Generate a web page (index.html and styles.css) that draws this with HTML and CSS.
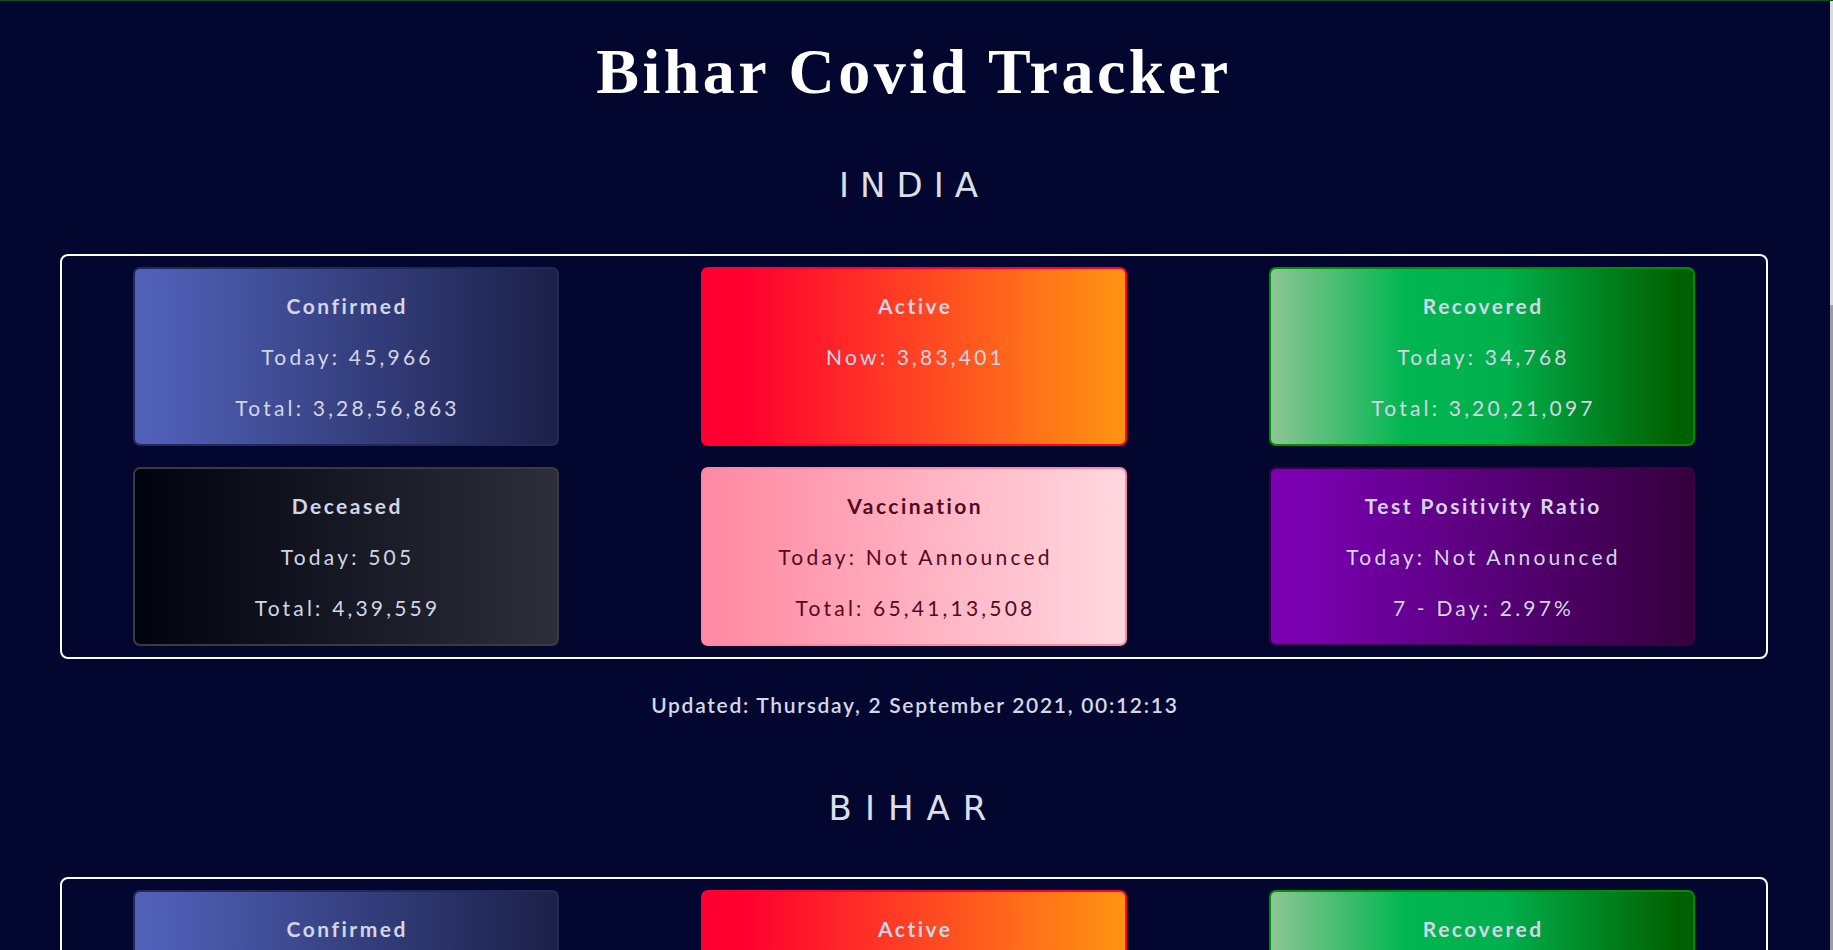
FILE: index.html
```html
<!DOCTYPE html>
<html lang="en">
<head>
<meta charset="utf-8">
<title>Bihar Covid Tracker</title>
<link rel="stylesheet" href="styles.css">
</head>
<body>
<main class="page">
  <h1 class="title">Bihar Covid Tracker</h1>

  <section class="region">
    <h2 class="region-name">INDIA</h2>
    <div class="stats">
      <div class="card card-confirmed">
        <h3 class="card-title">Confirmed</h3>
        <p class="card-line">Today: 45,966</p>
        <p class="card-line">Total: 3,28,56,863</p>
      </div>
      <div class="card card-active">
        <h3 class="card-title">Active</h3>
        <p class="card-line">Now: 3,83,401</p>
      </div>
      <div class="card card-recovered">
        <h3 class="card-title">Recovered</h3>
        <p class="card-line">Today: 34,768</p>
        <p class="card-line">Total: 3,20,21,097</p>
      </div>
      <div class="card card-deceased">
        <h3 class="card-title">Deceased</h3>
        <p class="card-line">Today: 505</p>
        <p class="card-line">Total: 4,39,559</p>
      </div>
      <div class="card card-vaccination">
        <h3 class="card-title">Vaccination</h3>
        <p class="card-line">Today: Not Announced</p>
        <p class="card-line">Total: 65,41,13,508</p>
      </div>
      <div class="card card-tpr">
        <h3 class="card-title">Test Positivity Ratio</h3>
        <p class="card-line">Today: Not Announced</p>
        <p class="card-line">7 - Day: 2.97%</p>
      </div>
    </div>
    <p class="updated">Updated: Thursday, 2 September 2021, 00:12:13</p>
  </section>

  <section class="region">
    <h2 class="region-name region-name-wide">BIHAR</h2>
    <div class="stats">
      <div class="card card-confirmed">
        <h3 class="card-title">Confirmed</h3>
        <p class="card-line">Today: 9</p>
        <p class="card-line">Total: 7,25,763</p>
      </div>
      <div class="card card-active">
        <h3 class="card-title">Active</h3>
        <p class="card-line">Now: 64</p>
      </div>
      <div class="card card-recovered">
        <h3 class="card-title">Recovered</h3>
        <p class="card-line">Today: 12</p>
        <p class="card-line">Total: 7,16,044</p>
      </div>
      <div class="card card-deceased">
        <h3 class="card-title">Deceased</h3>
        <p class="card-line">Today: 0</p>
        <p class="card-line">Total: 9,655</p>
      </div>
      <div class="card card-vaccination">
        <h3 class="card-title">Vaccination</h3>
        <p class="card-line">Today: Not Announced</p>
        <p class="card-line">Total: 4,12,36,318</p>
      </div>
      <div class="card card-tpr">
        <h3 class="card-title">Test Positivity Ratio</h3>
        <p class="card-line">Today: Not Announced</p>
        <p class="card-line">7 - Day: 0.01%</p>
      </div>
    </div>
    <p class="updated">Updated: Thursday, 2 September 2021, 00:12:13</p>
  </section>

  <footer class="footer">
    <p class="footer-text">Data sources: MoHFW, Bihar Health Department</p>
  </footer>
</main>
<div class="scrollbar" aria-hidden="true"><div class="scrollbar-thumb"></div></div>
</body>
</html>
```

FILE: styles.css
```css
html {
  background: #03072f;
}

body {
  margin: 0;
  padding-right: 5px;
  border-top: 1px solid #0b4a1f;
  background: #03072f;
}

.scrollbar {
  position: fixed;
  top: 1px;
  right: 0;
  bottom: 0;
  width: 3px;
  background: #9c9ca6;
}

.scrollbar-thumb {
  height: 304px;
  background: #d9d9de;
}

.page {
  display: flex;
  flex-direction: column;
}

.title {
  margin: 34px 0 0;
  font: 700 64px/74px "Liberation Serif", "Times New Roman", serif;
  letter-spacing: 3.5px;
  color: #ffffff;
  text-align: center;
}

.region {
  display: flex;
  flex-direction: column;
}

.region-name {
  margin: 56px 0 0;
  font: 400 34px/40px "DejaVu Sans", sans-serif;
  letter-spacing: 11px;
  color: #dcdfea;
  text-align: center;
}

.region-name-wide {
  letter-spacing: 13px;
}

.region + .region .region-name {
  margin-top: 68px;
}

.stats {
  margin: 49px 60px 0;
  padding: 11px 0;
  border: 2px solid #ffffff;
  border-radius: 8px;
  display: grid;
  grid-template-columns: repeat(3, 25%);
  justify-content: space-around;
  row-gap: 21px;
}

.card {
  height: 179px;
  box-sizing: border-box;
  padding-top: 11px;
  border: 2px solid;
  border-radius: 7px;
  text-align: center;
  color: #d4d6e6;
  font-family: Lato, "Open Sans", sans-serif;
}

.card-title,
.card-line {
  margin: 0;
  font-size: 21px;
  line-height: 51px;
}

.card-title {
  font-weight: 700;
  letter-spacing: 2.5px;
  padding-left: 2.5px;
}

.card-line {
  font-weight: 400;
  letter-spacing: 3.2px;
  padding-left: 3px;
}

.card-confirmed {
  background: linear-gradient(to right, #5060b8 4%, #1b2047);
  border-color: #22285a;
}

.card-active {
  background: linear-gradient(to right, #ff0030 10%, #ff9512);
  border-color: #ff0030;
}

.card-recovered {
  background: linear-gradient(to right, #8dc594 0%, #00b650 32%, #00b04c 55%, #005f00 97%);
  border-color: #008f00;
}

.card-deceased {
  background: linear-gradient(to right, #02040f 3%, #2c2e3a);
  border-color: #3b3b3f;
}

.card-vaccination {
  background: linear-gradient(to right, #ff8aa3 3%, #ffd8e0);
  border-color: #ff87a0;
  color: #520a1f;
}

.card-tpr {
  background: linear-gradient(to right, #7a00b2 8%, #34003c);
  border-color: #3b0045;
}

.updated {
  margin: 31px 0 0;
  padding-left: 1.7px;
  font: 600 21px/30px Lato, "Open Sans", sans-serif;
  letter-spacing: 1.7px;
  color: #d6d8e8;
  text-align: center;
}

.footer {
  margin-top: 80px;
  padding-bottom: 1400px;
}

.footer-text {
  margin: 0;
  font: 400 16px/24px Lato, sans-serif;
  color: #8a8fb0;
  text-align: center;
}
```
